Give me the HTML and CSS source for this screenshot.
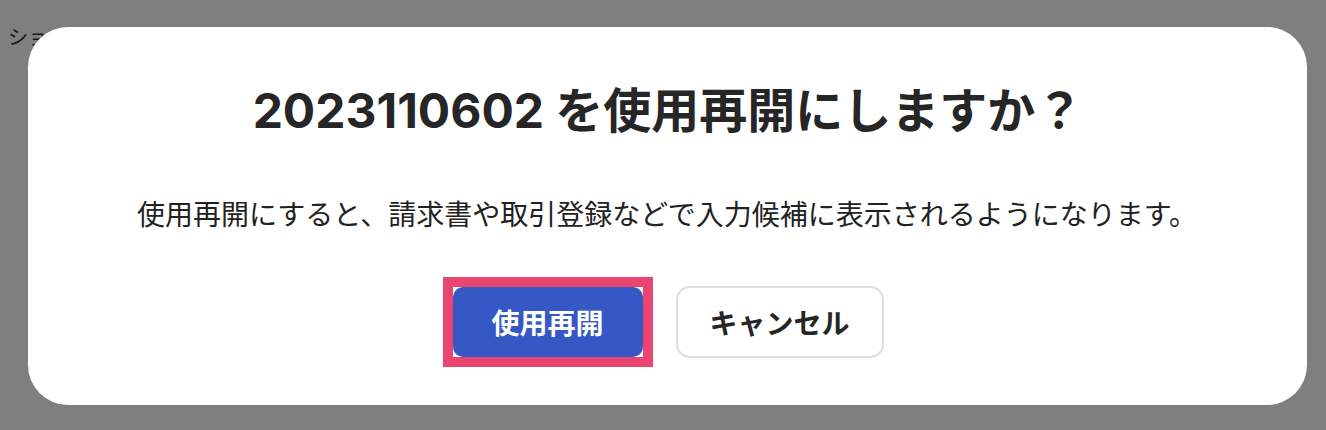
FILE: index.html
```html
<!DOCTYPE html>
<html lang="ja">
<head>
<meta charset="utf-8">
<title>使用再開</title>
<link rel="stylesheet" href="styles.css">
</head>
<body>
<div class="page">
  <p class="page-heading">ショップ一覧</p>
</div>
<div class="overlay">
  <div class="modal">
    <h1 class="modal-title">2023110602 を使用再開にしますか？</h1>
    <p class="modal-text">使用再開にすると、請求書や取引登録などで入力候補に表示されるようになります。</p>
    <div class="modal-actions">
      <div class="focus-ring">
        <button class="btn btn-primary">使用再開</button>
      </div>
      <button class="btn btn-secondary">キャンセル</button>
    </div>
  </div>
</div>
</body>
</html>
```

FILE: styles.css
```css
* { box-sizing: border-box; }
html, body {
  margin: 0;
  padding: 0;
  background: #ffffff;
  font-family: "Noto Sans CJK JP", "Noto Sans", sans-serif;
  color: #222222;
}
.page {
  padding: 22px 8px;
}
.page-heading {
  margin: 0;
  font-size: 20px;
  line-height: 30px;
  color: #333333;
}
.overlay {
  position: fixed;
  inset: 0;
  background: rgba(0, 0, 0, 0.5);
  display: flex;
  align-items: flex-start;
  padding: 27px 0 0 28px;
}
.modal {
  width: 1279px;
  height: 378px;
  background: #ffffff;
  border-radius: 40px;
  padding: 48px 9px 0 0;
  display: flex;
  flex-direction: column;
  align-items: center;
}
.modal-title {
  margin: 0;
  padding-left: 10px;
  font-family: Inter, "Noto Sans CJK JP", sans-serif;
  font-size: 48px;
  line-height: 72px;
  font-weight: 700;
  color: #262626;
  letter-spacing: 0;
}
.modal-text {
  margin: 45px 0 0;
  padding-left: 8px;
  font-size: 28px;
  line-height: 42px;
  font-weight: 400;
  color: #222222;
}
.modal-actions {
  margin-top: 43px;
  display: flex;
  align-items: center;
  gap: 23px;
}
.focus-ring {
  border: 10px solid #ea4470;
  background: #ffffff;
  display: flex;
}
.btn {
  font-family: "Noto Sans CJK JP", "Noto Sans", sans-serif;
  font-size: 28px;
  font-weight: 700;
  height: 72px;
  border-radius: 12px;
  cursor: pointer;
  display: flex;
  align-items: center;
  justify-content: center;
}
.btn-primary {
  width: 190px;
  height: 70px;
  background: #3558c4;
  color: #ffffff;
  border: none;
  border-radius: 10px;
}
.btn-secondary {
  width: 208px;
  background: #ffffff;
  color: #262626;
  border: 2px solid #dddddd;
  border-radius: 14px;
}
```
